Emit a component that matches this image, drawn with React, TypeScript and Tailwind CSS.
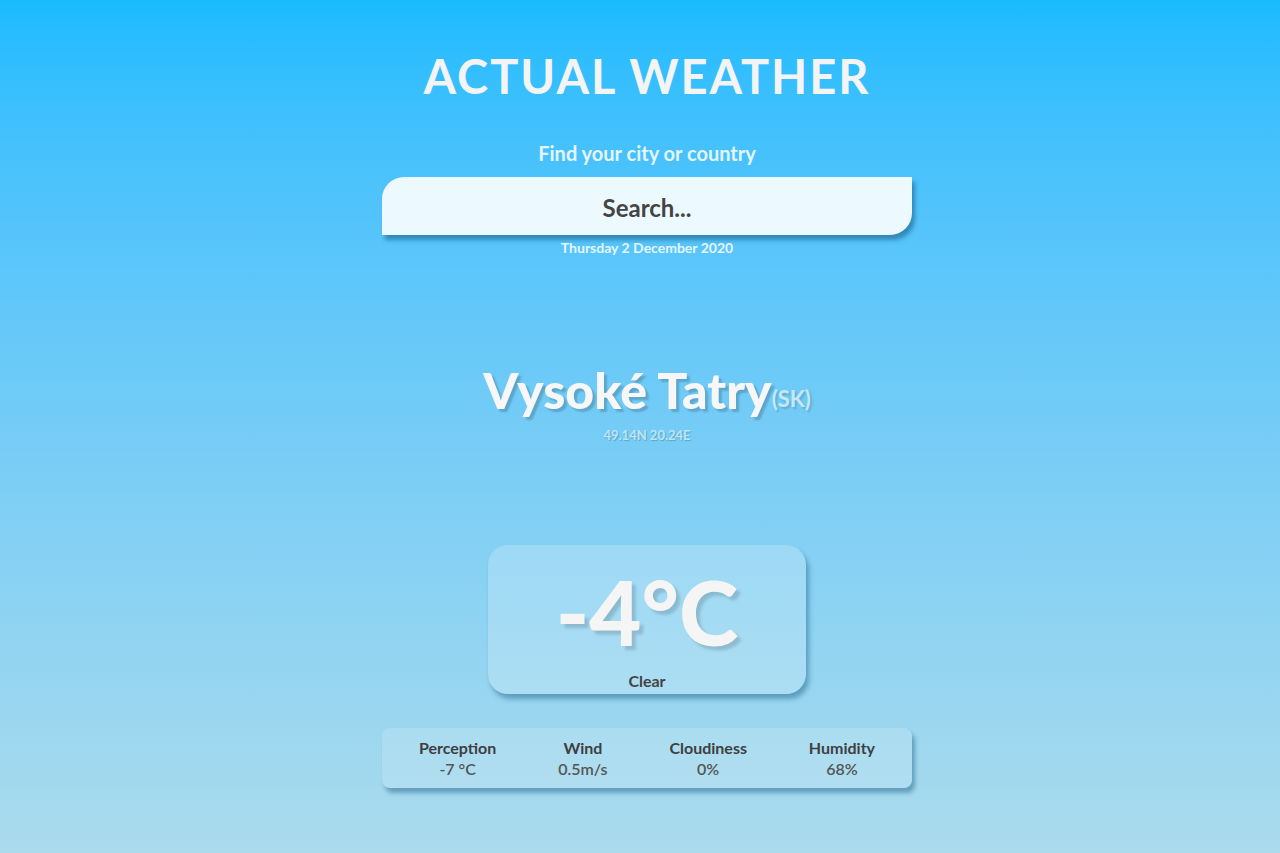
import React from 'react';

const details = [
  { label: "Perception", value: "-7 °C" },
  { label: "Wind", value: "0.5m/s" },
  { label: "Cloudiness", value: "0%" },
  { label: "Humidity", value: "68%" },
];

const App = () => {
  return (
    <div
      className="min-h-screen w-full pl-[14px] flex flex-col items-center bg-gradient-to-b from-[#19bbff] to-[#abdbec]"
      style={{ fontFamily: "Lato, 'Open Sans', sans-serif" }}
    >
      {/* Header */}
      <h1 className="mt-[48px] text-[47px] leading-[56px] font-bold tracking-[2px] text-[#f4f4f4]">
        ACTUAL WEATHER
      </h1>

      {/* Search */}
      <p className="mt-[37px] text-[20px] leading-[24px] font-bold text-[#e3f5fd]">
        Find your city or country
      </p>
      <input
        type="text"
        placeholder="Search..."
        className="mt-[12px] w-[530px] h-[58px] pt-[2px] bg-[#ecf9fe] rounded-tl-[22px] rounded-br-[22px] text-center text-[24px] font-bold text-[#444] placeholder:text-[#444] outline-none shadow-[3px_5px_4px_rgba(20,90,130,0.55)]"
      />
      <p className="mt-[5px] text-[14px] leading-[16px] font-bold text-[#e3f5fd]">
        Thursday 2 December 2020
      </p>

      {/* Location */}
      <div className="mt-[106px] flex items-end">
        <span className="text-[50px] leading-[56px] font-black text-[#f7f7f7] [text-shadow:3px_3px_2px_rgba(0,0,0,0.18)]">
          Vysoké Tatry
        </span>
        <span className="mb-[6px] text-[22px] leading-[26px] font-bold text-[#c5e8f5] [text-shadow:2px_2px_2px_rgba(0,0,0,0.15)]">
          (SK)
        </span>
      </div>
      <p className="mt-[9px] text-[13px] leading-[16px] font-bold text-[#bde5f6] [text-shadow:1px_1px_1px_rgba(0,0,0,0.2)]">
        49.14N 20.24E
      </p>

      {/* Temperature */}
      <div className="mt-[102px] w-[318px] h-[149px] rounded-[20px] bg-white/20 flex flex-col items-center shadow-[3px_5px_5px_rgba(20,90,130,0.45)]">
        <span className="mt-[16px] text-[90px] leading-[100px] font-black text-[#f5f5f5] [text-shadow:4px_4px_3px_rgba(0,0,0,0.15)]">
          -4°C
        </span>
        <span className="mt-[10px] text-[16px] leading-[20px] font-bold text-[#444]">
          Clear
        </span>
      </div>

      {/* Details */}
      <div className="mt-[34px] mb-[65px] w-[530px] h-[60px] rounded-[8px] bg-white/15 flex items-center justify-around px-[6px] shadow-[3px_5px_4px_rgba(20,90,130,0.45)]">
        {details.map((d) => (
          <div key={d.label} className="flex flex-col items-center">
            <span className="text-[16px] leading-[20px] font-bold text-[#3f3f3f]">{d.label}</span>
            <span className="mt-[1px] text-[16px] leading-[20px] font-semibold text-[#555]">{d.value}</span>
          </div>
        ))}
      </div>
    </div>
  );
};

export default App;
